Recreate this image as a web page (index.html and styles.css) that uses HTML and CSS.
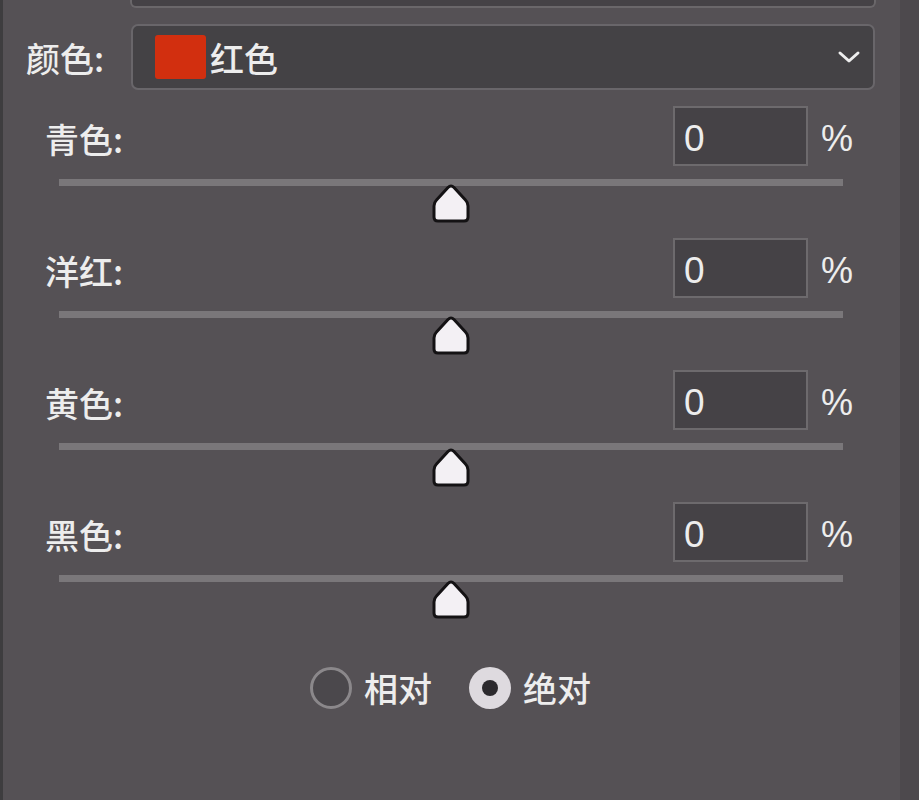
FILE: index.html
```html
<!DOCTYPE html>
<html lang="zh">
<head>
<meta charset="utf-8">
<title>可选颜色</title>
<link rel="stylesheet" href="styles.css">
</head>
<body>
<div class="panel">
  <div class="main">
    <div class="top-field"></div>
    <div class="color-row">
      <span class="color-label">颜色:</span>
      <div class="select">
        <span class="swatch"></span>
        <span class="select-text">红色</span>
        <svg class="chevron" width="24" height="14" viewBox="0 0 24 14"><path d="M3 3 L12 11 L21 3" fill="none" stroke="#eeeeee" stroke-width="3" stroke-linecap="round" stroke-linejoin="round"/></svg>
      </div>
    </div>

    <div class="sliders">
      <div class="slider-block">
        <div class="value-row">
          <span class="value-label">青色:</span>
          <div class="num-input">0</div>
          <span class="pct">%</span>
        </div>
        <div class="track"></div>
        <div class="thumb-row"><svg class="thumb" width="40" height="40" viewBox="0 0 40 40"><path d="M20 2 Q21.5 2 23 3.5 L34.5 16 Q37 18.5 37 22 L37 33 Q37 37 33 37 L7 37 Q3 37 3 33 L3 22 Q3 18.5 5.5 16 L17 3.5 Q18.5 2 20 2 Z" fill="#f3f0f4" stroke="#141214" stroke-width="3" stroke-linejoin="round"/></svg></div>
      </div>
      <div class="slider-block">
        <div class="value-row">
          <span class="value-label">洋红:</span>
          <div class="num-input">0</div>
          <span class="pct">%</span>
        </div>
        <div class="track"></div>
        <div class="thumb-row"><svg class="thumb" width="40" height="40" viewBox="0 0 40 40"><path d="M20 2 Q21.5 2 23 3.5 L34.5 16 Q37 18.5 37 22 L37 33 Q37 37 33 37 L7 37 Q3 37 3 33 L3 22 Q3 18.5 5.5 16 L17 3.5 Q18.5 2 20 2 Z" fill="#f3f0f4" stroke="#141214" stroke-width="3" stroke-linejoin="round"/></svg></div>
      </div>
      <div class="slider-block">
        <div class="value-row">
          <span class="value-label">黄色:</span>
          <div class="num-input">0</div>
          <span class="pct">%</span>
        </div>
        <div class="track"></div>
        <div class="thumb-row"><svg class="thumb" width="40" height="40" viewBox="0 0 40 40"><path d="M20 2 Q21.5 2 23 3.5 L34.5 16 Q37 18.5 37 22 L37 33 Q37 37 33 37 L7 37 Q3 37 3 33 L3 22 Q3 18.5 5.5 16 L17 3.5 Q18.5 2 20 2 Z" fill="#f3f0f4" stroke="#141214" stroke-width="3" stroke-linejoin="round"/></svg></div>
      </div>
      <div class="slider-block">
        <div class="value-row">
          <span class="value-label">黑色:</span>
          <div class="num-input">0</div>
          <span class="pct">%</span>
        </div>
        <div class="track"></div>
        <div class="thumb-row"><svg class="thumb" width="40" height="40" viewBox="0 0 40 40"><path d="M20 2 Q21.5 2 23 3.5 L34.5 16 Q37 18.5 37 22 L37 33 Q37 37 33 37 L7 37 Q3 37 3 33 L3 22 Q3 18.5 5.5 16 L17 3.5 Q18.5 2 20 2 Z" fill="#f3f0f4" stroke="#141214" stroke-width="3" stroke-linejoin="round"/></svg></div>
      </div>
    </div>

    <div class="radios">
      <label class="radio-item"><span class="radio"></span><span class="radio-text">相对</span></label>
      <label class="radio-item"><span class="radio checked"></span><span class="radio-text">绝对</span></label>
    </div>
  </div>
  <div class="strip"></div>
</div>
</body>
</html>
```

FILE: styles.css
```css
html, body {
  margin: 0;
  padding: 0;
  height: 100%;
}

body {
  background: #545054;
  font-family: "Noto Sans CJK SC", "Noto Sans", "Liberation Sans", sans-serif;
  color: #ededed;
}

.panel {
  display: flex;
  height: 800px;
  border-left: 3px solid #3e3d3f;
  box-sizing: border-box;
}

.main {
  width: 897px;
  background: #555155;
  display: flex;
  flex-direction: column;
}

.strip {
  flex: 1;
  background: #4d494d;
}

.top-field {
  margin-left: 127px;
  width: 742px;
  height: 6px;
  border: 2px solid #6a676a;
  border-top: none;
  border-radius: 0 0 6px 6px;
  background: #454246;
}

.color-row {
  display: flex;
  align-items: center;
  margin-top: 16px;
}

.color-label {
  width: 128px;
  flex: none;
  padding-left: 23px;
  box-sizing: border-box;
  font-size: 34px;
  font-weight: 500;
  line-height: 40px;
  margin-top: 2px;
}

.select {
  width: 744px;
  height: 66px;
  box-sizing: border-box;
  border: 2px solid #69666a;
  border-radius: 7px;
  background: #444245;
  display: flex;
  align-items: center;
  padding-left: 22px;
  padding-right: 12px;
}

.swatch {
  width: 51px;
  height: 44px;
  border-radius: 3px;
  background: #d22f0f;
  margin-right: 4px;
}

.select-text {
  font-size: 34px;
  font-weight: 500;
  line-height: 40px;
  flex: 1;
  margin-top: 2px;
}

.chevron {
  display: block;
}

.sliders {
  margin-top: 16px;
  display: flex;
  flex-direction: column;
}

.slider-block {
  display: flex;
  flex-direction: column;
  height: 132px;
}

.value-row {
  display: flex;
  align-items: center;
  height: 60px;
  width: 857px;
  box-sizing: border-box;
  padding-left: 42px;
}

.value-label {
  font-size: 34px;
  font-weight: 500;
  line-height: 40px;
  flex: 1;
  margin-top: 6px;
}

.num-input {
  width: 135px;
  height: 60px;
  flex: none;
  box-sizing: border-box;
  border: 2px solid #6d6a6d;
  background: #454246;
  font-family: "Liberation Sans", "Noto Sans", sans-serif;
  font-size: 37px;
  line-height: 62px;
  padding-left: 9px;
}

.pct {
  width: 52px;
  flex: none;
  padding-left: 13px;
  box-sizing: border-box;
  font-family: "Liberation Sans", "Noto Sans", sans-serif;
  font-size: 36px;
  margin-top: 5px;
}

.track {
  margin-top: 13px;
  margin-left: 56px;
  width: 784px;
  height: 7px;
  background: #7a777a;
}

.thumb-row {
  margin-left: 56px;
  width: 784px;
  display: flex;
  justify-content: center;
  margin-top: -2px;
}

.thumb {
  display: block;
}

.radios {
  display: flex;
  align-items: center;
  margin-left: 307px;
  margin-top: 33px;
  gap: 37px;
}

.radio-item {
  display: flex;
  align-items: center;
  gap: 12px;
}

.radio {
  width: 42px;
  height: 42px;
  flex: none;
  box-sizing: border-box;
  border-radius: 50%;
  border: 3px solid #8b888b;
  background: #4b484c;
  display: flex;
  align-items: center;
  justify-content: center;
}

.radio.checked {
  border: none;
  background: #dedadf;
}

.radio.checked::after {
  content: "";
  width: 16px;
  height: 16px;
  border-radius: 50%;
  background: #2c2a2e;
}

.radio-text {
  font-size: 34px;
  font-weight: 500;
  line-height: 40px;
}
```
